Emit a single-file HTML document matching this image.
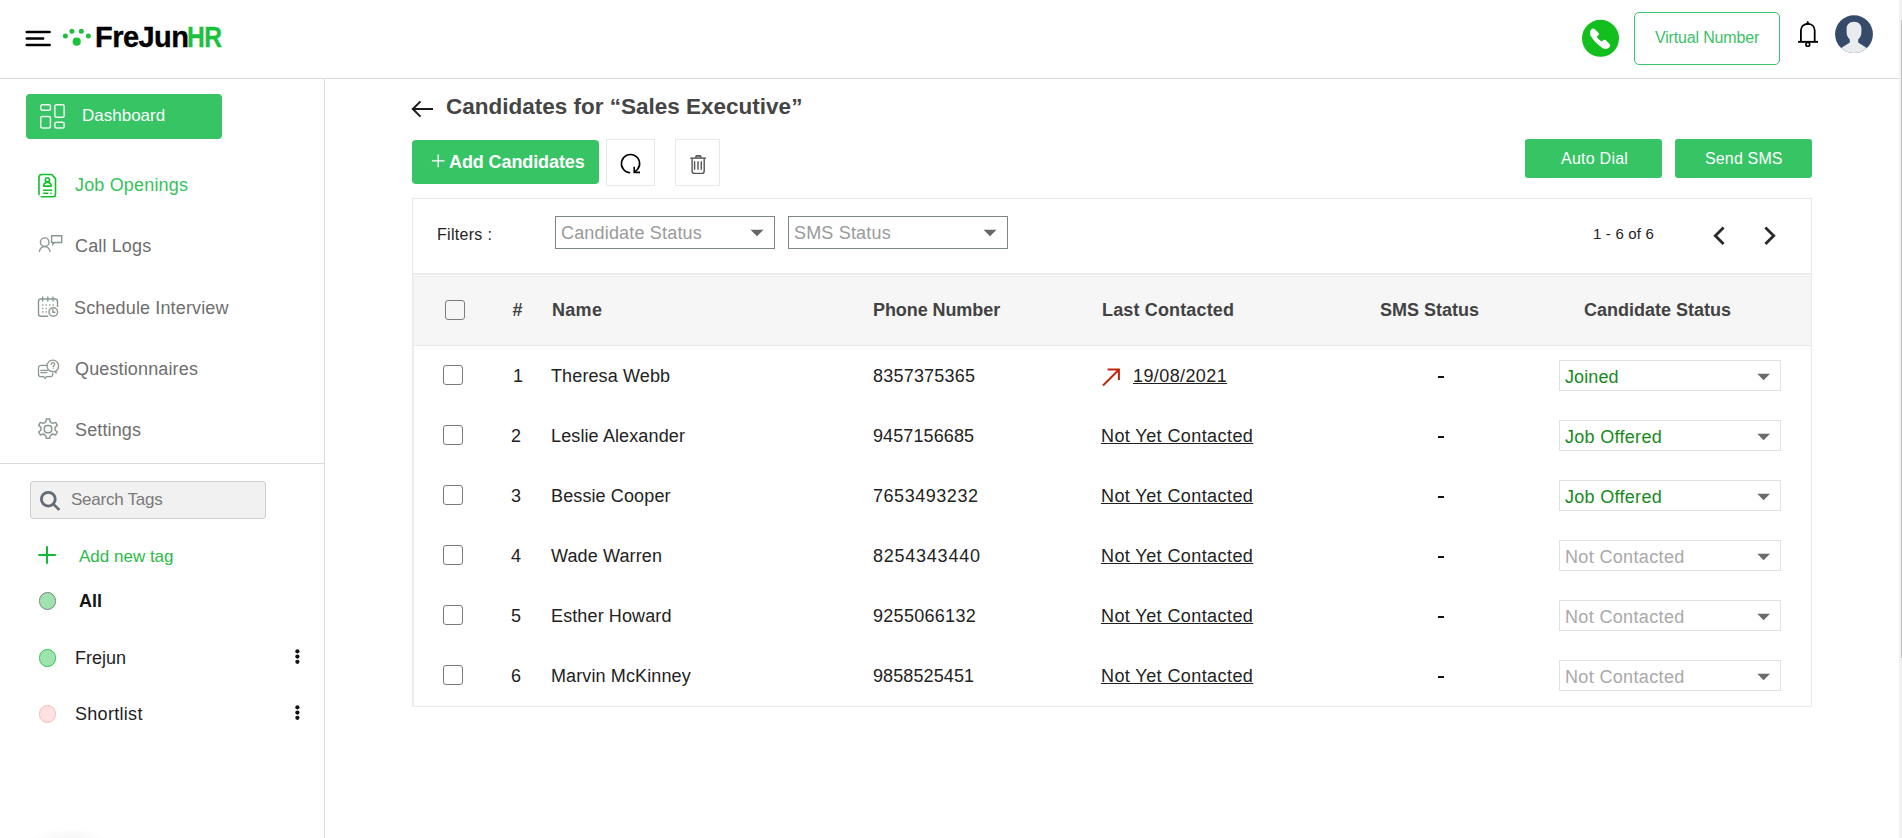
<!DOCTYPE html>
<html><head><meta charset="utf-8"><title>FreJunHR</title>
<style>
html,body{margin:0;padding:0;background:#fff;width:1902px;height:838px;overflow:hidden;position:relative}
.t{position:absolute;white-space:nowrap;font-family:"Liberation Sans", sans-serif}
svg{overflow:visible}
</style></head><body>
<div style="position:absolute;left:0px;top:78px;width:1899px;height:1px;background:#dcdcdc"></div>
<div style="position:absolute;left:324px;top:79px;width:1px;height:759px;background:#dcdcdc"></div>
<svg style="position:absolute;left:24px;top:29px" width="28" height="19" viewBox="0 0 28 19" fill="none"><path d="M2.7 3h23M2.7 9.5h16.5M2.7 16h23" stroke="#000" stroke-width="2.4" stroke-linecap="round"/></svg>
<svg style="position:absolute;left:60px;top:26px" width="34" height="22" viewBox="0 0 34 22" fill="none"><circle cx="5.4" cy="10" r="2.5" fill="#1cc13e"/><circle cx="11.9" cy="5.2" r="2.5" fill="#1cc13e"/><circle cx="21.3" cy="5.2" r="2.5" fill="#1cc13e"/><circle cx="28.4" cy="10" r="2.5" fill="#1cc13e"/><circle cx="16.7" cy="15.7" r="4.1" fill="#1cc13e"/></svg>
<div class="t" style="left:95px;top:23px;font-size:29px;line-height:29px;font-weight:700;color:#000;letter-spacing:-0.55px;-webkit-text-stroke:0.35px currentColor">FreJun<span style="color:#1cc13e;display:inline-block;transform:scaleX(0.85);transform-origin:0 0;letter-spacing:-0.6px;margin-left:-1.3px">HR</span></div>
<svg style="position:absolute;left:1580px;top:18px" width="42" height="42" viewBox="0 0 42 42" fill="none"><circle cx="20.5" cy="20.3" r="18.5" fill="#13bf1f"/><path d="M11.2 11.5C12.2 10.4 13.7 10.1 14.6 11L18.6 15C19.2 15.6 19.1 16.4 18.5 17L16.9 18.5C17.6 20.3 19.6 22.5 21.8 23.6L23.4 22.1C24 21.5 24.9 21.5 25.5 22.1L29.7 26.1C30.5 26.9 30.4 28.2 29.6 29.1L28.4 30C26.6 31.3 24.2 31.1 22.4 29.9C17.5 26.8 13.5 22.7 10.6 17.8C9.6 15.8 9.8 13 11.2 11.5Z" fill="#fff"/></svg>
<div style="position:absolute;left:1634px;top:12px;width:146px;height:53px;box-sizing:border-box;border:1.5px solid #3cc46a;border-radius:5px"></div>
<div class="t" style="left:1655px;top:30px;font-size:16px;line-height:16px;font-weight:400;color:#3bbf68;letter-spacing:-0.17px">Virtual Number</div>
<svg style="position:absolute;left:1792px;top:16px" width="32" height="34" viewBox="0 0 32 34" fill="none"><path d="M8.9 25.8V14.5C8.9 10.3 12 7.8 15.8 7.8S22.7 10.3 22.7 14.5V25.8" stroke="#000" stroke-width="1.8"/><path d="M6.1 25.85H26" stroke="#000" stroke-width="1.9"/><path d="M14 8.4L15.8 5.1L17.6 8.4Z" fill="#000" stroke="#000" stroke-width="0.6" stroke-linejoin="round"/><circle cx="15.8" cy="28.4" r="1.9" stroke="#000" stroke-width="1.6"/></svg>
<svg style="position:absolute;left:1835px;top:15px" width="38" height="38" viewBox="0 0 38 38" fill="none"><defs><clipPath id="av"><circle cx="19" cy="19.2" r="18.9"/></clipPath></defs><g clip-path="url(#av)"><rect width="38" height="38" fill="#364a6a"/><path d="M19 6.7C23.5 6.7 26.4 9.5 26.4 13.5V17.5C26.4 20.5 25 22.5 23.2 24.5V27.5L31 32.6L40 40H-2L7 32.6L14.8 27.5V24.5C13 22.5 11.6 20.5 11.6 17.5V13.5C11.6 9.5 14.5 6.7 19 6.7Z" fill="#e9ecef"/></g></svg>
<div style="position:absolute;left:1899px;top:0px;width:3px;height:838px;background:#f1f1f1"></div>
<div style="position:absolute;left:1901px;top:20px;width:1px;height:638px;background:#c1c1c1"></div>
<div style="position:absolute;left:26px;top:94px;width:196px;height:45px;background:#36c464;border-radius:4px"></div>
<svg style="position:absolute;left:39px;top:103px" width="27" height="27" viewBox="0 0 27 27" fill="none"><g stroke="#eef5ef" stroke-width="1.5"><rect x="1.75" y="1.75" width="9.7" height="5.5" rx="1.5"/><rect x="1.75" y="13.45" width="9.7" height="11.5" rx="1.5"/><rect x="15.85" y="1.75" width="9.3" height="12.5" rx="1.5"/><rect x="15.85" y="19.15" width="9.3" height="5.8" rx="1.5"/></g></svg>
<div class="t" style="left:82px;top:107px;font-size:17px;line-height:17px;font-weight:400;color:#fff;">Dashboard</div>
<svg style="position:absolute;left:36px;top:172px" width="22" height="27" viewBox="0 0 22 27" fill="none"><g stroke="#13bf2d" stroke-width="1.6" stroke-linecap="round" stroke-linejoin="round"><path d="M3 22.4V5.5c0-1.7 1.3-3 3-3h9.7l3.8 4.1v15.7c0 1.6-1 2.4-2.4 2.4H5.2"/><circle cx="11.4" cy="7.8" r="2.1"/><path d="M7.6 14.1c0-2.2 1.7-3.6 3.8-3.6s3.8 1.4 3.8 3.6z"/><path d="M7.7 18.3h7.9M7.7 21.2h4.2M14.8 21.2h.2"/></g></svg>
<div class="t" style="left:75px;top:176px;font-size:18px;line-height:18px;font-weight:400;color:#36c35a;letter-spacing:0.17px">Job Openings</div>
<svg style="position:absolute;left:36px;top:232px" width="28" height="24" viewBox="0 0 28 24" fill="none"><g stroke="#8a998f" stroke-width="1.4" fill="none"><circle cx="8.7" cy="10.2" r="4.3"/><path d="M3.3 19.8c.6-3.4 2.9-5.2 5.4-5.2s4.8 1.8 5.4 5.2"/><path d="M15.6 3.7h10.1v6.8h-7l-1.8 1.8v-1.8h-1.3z"/></g></svg>
<div class="t" style="left:75px;top:237px;font-size:18px;line-height:18px;font-weight:400;color:#6e6e6e;letter-spacing:0.14px">Call Logs</div>
<svg style="position:absolute;left:36px;top:294px" width="24" height="25" viewBox="0 0 24 25" fill="none"><g stroke="#8a998f" stroke-width="1.4" fill="none" stroke-linecap="round"><path d="M11.6 22.3H5c-1.4 0-2.5-1.1-2.5-2.5V7.5C2.5 6.1 3.6 5 5 5h14c1.4 0 2.5 1.1 2.5 2.5v5"/><path d="M6.6 3v4M11.8 3v4M17 3v4"/><circle cx="17.3" cy="18" r="4.3"/><path d="M16.9 15.6v2.7h1.9"/></g><g fill="#8a998f"><rect x="6" y="10.3" width="1.4" height="1.4"/><rect x="9.5" y="10.3" width="1.4" height="1.4"/><rect x="13" y="10.3" width="1.4" height="1.4"/><rect x="16.5" y="10.3" width="1.4" height="1.4"/><rect x="6" y="13.8" width="1.4" height="1.4"/><rect x="9.5" y="13.8" width="1.4" height="1.4"/><rect x="6" y="17.2" width="1.4" height="1.4"/><rect x="9.5" y="17.2" width="1.4" height="1.4"/></g></svg>
<div class="t" style="left:74px;top:299px;font-size:18px;line-height:18px;font-weight:400;color:#6e6e6e;letter-spacing:0.14px">Schedule Interview</div>
<svg style="position:absolute;left:36px;top:355px" width="24" height="25" viewBox="0 0 24 25" fill="none"><g stroke="#8a998f" stroke-width="1.3" fill="none" stroke-linecap="round" stroke-linejoin="round"><path d="M10.6 10.3H5c-1.4 0-2.5 1.1-2.5 2.5v6.4c0 1.4 1.1 2.5 2.5 2.5h2.8l1.3 1.6 1.3-1.6h3.8c1.4 0 2.5-1.1 2.5-2.5v-1"/><path d="M18.9 16.5l1.3 1.6-.3-2.3c1.7-1 2.7-2.8 2.7-4.9 0-3.2-2.6-5.7-5.8-5.7s-5.8 2.5-5.8 5.7 2.6 5.7 5.8 5.7c.7 0 1.4-.1 2.1-.1z"/><path d="M15.3 9.3c0-1 .8-1.6 1.7-1.6s1.7.6 1.7 1.6c0 1.2-1.5 1.3-1.5 2.6"/><path d="M4.8 15.4h6.6M4.8 17.6h6.2"/></g><circle cx="17.2" cy="13.6" r=".6" fill="#8a998f"/></svg>
<div class="t" style="left:75px;top:360px;font-size:18px;line-height:18px;font-weight:400;color:#6e6e6e;letter-spacing:0.14px">Questionnaires</div>
<svg style="position:absolute;left:36px;top:416px" width="24" height="26" viewBox="0 0 24 26" fill="none"><g stroke="#8a998f" stroke-width="1.5" fill="none" stroke-linejoin="round"><path d="M10.3 3.1h3.4l.7 3 2.3 1.3 2.9-1 1.7 3-2.3 2v2.6l2.3 2-1.7 3-2.9-1-2.3 1.3-.7 3h-3.4l-.7-3-2.3-1.3-2.9 1-1.7-3 2.3-2v-2.6l-2.3-2 1.7-3 2.9 1 2.3-1.3z"/><rect x="8.3" y="9.4" width="7.4" height="7.4" rx="3"/></g></svg>
<div class="t" style="left:75px;top:421px;font-size:18px;line-height:18px;font-weight:400;color:#6e6e6e;letter-spacing:0.14px">Settings</div>
<div style="position:absolute;left:0px;top:463px;width:324px;height:1px;background:#dcdcdc"></div>
<div style="position:absolute;left:30px;top:481px;width:236px;height:38px;box-sizing:border-box;background:#f1f1f1;border:1px solid #cfcfcf;border-radius:3px"></div>
<svg style="position:absolute;left:38px;top:489px" width="24" height="24" viewBox="0 0 24 24" fill="none"><circle cx="10.3" cy="10.2" r="6.9" stroke="#656b73" stroke-width="2.8"/><path d="M15.6 15.4L20.6 20.2" stroke="#656b73" stroke-width="2.6" stroke-linecap="round"/></svg>
<div class="t" style="left:71px;top:491px;font-size:17px;line-height:17px;font-weight:400;color:#7a7a7a;letter-spacing:-0.25px">Search Tags</div>
<svg style="position:absolute;left:36px;top:544px" width="22" height="22" viewBox="0 0 22 22" fill="none"><path d="M11 2.3v17.5M2.3 11h17.5" stroke="#13b836" stroke-width="2"/></svg>
<div class="t" style="left:79px;top:548px;font-size:17px;line-height:17px;font-weight:400;color:#2bbb48;">Add new tag</div>
<div style="position:absolute;left:38.8px;top:592.2px;width:17.6px;height:17.6px;box-sizing:border-box;background:#9fe3b1;border:1px solid #7f7f7f;border-radius:50%"></div>
<div class="t" style="left:79px;top:592px;font-size:18px;line-height:18px;font-weight:700;color:#151515;">All</div>
<div style="position:absolute;left:38.8px;top:649.2px;width:17.6px;height:17.6px;box-sizing:border-box;background:#9fe3b1;border:1px solid #2cc44d;border-radius:50%"></div>
<div class="t" style="left:75px;top:649px;font-size:18px;line-height:18px;font-weight:400;color:#1e1e1e;">Frejun</div>
<div style="position:absolute;left:38.8px;top:705.2px;width:17.6px;height:17.6px;box-sizing:border-box;background:#ffe1e1;border:1px solid #f7bcbc;border-radius:50%"></div>
<div class="t" style="left:75px;top:705px;font-size:18px;line-height:18px;font-weight:400;color:#1e1e1e;letter-spacing:0.3px">Shortlist</div>
<svg style="position:absolute;left:294px;top:649px" width="7" height="16" viewBox="0 0 7 16" fill="none"><circle cx="3.4" cy="2.3" r="2.1" fill="#111"/><circle cx="3.4" cy="7.6" r="2.1" fill="#111"/><circle cx="3.4" cy="12.8" r="2.1" fill="#111"/></svg>
<svg style="position:absolute;left:294px;top:705px" width="7" height="16" viewBox="0 0 7 16" fill="none"><circle cx="3.4" cy="2.3" r="2.1" fill="#111"/><circle cx="3.4" cy="7.6" r="2.1" fill="#111"/><circle cx="3.4" cy="12.8" r="2.1" fill="#111"/></svg>
<svg style="position:absolute;left:410px;top:99px" width="26" height="20" viewBox="0 0 26 20" fill="none"><path d="M23 10H3.3M10.5 2.4L2.8 10l7.7 7.6" stroke="#1a1a1a" stroke-width="2"/></svg>
<div class="t" style="left:446px;top:96px;font-size:22.5px;line-height:22.5px;font-weight:700;color:#454545;">Candidates for “Sales Executive”</div>
<div style="position:absolute;left:412px;top:140px;width:187px;height:44px;background:#36c464;border-radius:4px"></div>
<svg style="position:absolute;left:430px;top:153px" width="17" height="17" viewBox="0 0 17 17" fill="none"><path d="M8.25 1.6v12.6M1.9 7.9H14.6" stroke="#fff" stroke-width="1.4"/></svg>
<div class="t" style="left:449px;top:153px;font-size:18px;line-height:18px;font-weight:700;color:#fff;letter-spacing:-0.1px">Add Candidates</div>
<div style="position:absolute;left:606px;top:139px;width:49px;height:47px;box-sizing:border-box;border:1px solid #e8e8e8"></div>
<svg style="position:absolute;left:617px;top:151px" width="26" height="26" viewBox="0 0 26 26" fill="none"><path d="M13.2 21.7A9.1 9.1 0 1 1 20.6 18.3L17.6 21.2" stroke="#000" stroke-width="1.6"/><path d="M17.2 15.8V21.4H23" stroke="#000" stroke-width="1.6"/></svg>
<div style="position:absolute;left:675px;top:139px;width:45px;height:47px;box-sizing:border-box;border:1px solid #e8e8e8"></div>
<svg style="position:absolute;left:687px;top:153px" width="22" height="24" viewBox="0 0 22 24" fill="none"><g stroke="#555" stroke-width="1.4" fill="none"><path d="M3.2 5.1h15.7"/><path d="M8.9 5V3.6C8.9 3 9.3 2.6 9.9 2.6H12.9C13.5 2.6 13.9 3 13.9 3.6V5" fill="#888"/><path d="M5.1 5.3V18.3C5.1 19.5 6 20.4 7.2 20.4H15C16.2 20.4 17.2 19.5 17.2 18.3V5.3"/><path d="M7.6 8.2v8.6M11 8.2v8.6M14.3 8.2v8.6"/></g></svg>
<div style="position:absolute;left:1525px;top:139px;width:137px;height:39px;background:#36c464;border-radius:3px"></div>
<div class="t" style="left:1561px;top:151px;font-size:16px;line-height:16px;font-weight:400;color:#fff;letter-spacing:0.25px">Auto Dial</div>
<div style="position:absolute;left:1675px;top:139px;width:137px;height:39px;background:#36c464;border-radius:3px"></div>
<div class="t" style="left:1705px;top:151px;font-size:16px;line-height:16px;font-weight:400;color:#fff;letter-spacing:0.15px">Send SMS</div>
<div style="position:absolute;left:412px;top:198px;width:1400px;height:509px;box-sizing:border-box;border:1px solid #e9e9e9"></div>
<div class="t" style="left:437px;top:227px;font-size:16px;line-height:16px;font-weight:400;color:#222;letter-spacing:0.3px">Filters :</div>
<div style="position:absolute;left:555px;top:216px;width:220px;height:33px;box-sizing:border-box;border:1.3px solid #7d8884"></div>
<div class="t" style="left:561px;top:224px;font-size:18px;line-height:18px;font-weight:400;color:#9a9a9a;letter-spacing:0.18px">Candidate Status</div>
<svg style="position:absolute;left:750px;top:229px" width="14" height="8" viewBox="0 0 14 8" fill="none"><path d="M0.5 0.8h13L7 7.3z" fill="#666"/></svg>
<div style="position:absolute;left:788px;top:216px;width:220px;height:33px;box-sizing:border-box;border:1.3px solid #7d8884"></div>
<div class="t" style="left:794px;top:224px;font-size:18px;line-height:18px;font-weight:400;color:#9a9a9a;letter-spacing:0.18px">SMS Status</div>
<svg style="position:absolute;left:983px;top:229px" width="14" height="8" viewBox="0 0 14 8" fill="none"><path d="M0.5 0.8h13L7 7.3z" fill="#666"/></svg>
<div class="t" style="left:1593px;top:226px;font-size:15px;line-height:15px;font-weight:400;color:#222;letter-spacing:0.18px">1 - 6 of 6</div>
<svg style="position:absolute;left:1710px;top:225px" width="18" height="22" viewBox="0 0 18 22" fill="none"><path d="M13.6 2.4L5.3 10.7l8.3 8.3" stroke="#2a2a2a" stroke-width="2.8"/></svg>
<svg style="position:absolute;left:1760px;top:225px" width="18" height="22" viewBox="0 0 18 22" fill="none"><path d="M5.4 2.4L13.7 10.7l-8.3 8.3" stroke="#2a2a2a" stroke-width="2.8"/></svg>
<div style="position:absolute;left:413px;top:273px;width:1398px;height:2px;background:#ececec"></div>
<div style="position:absolute;left:413px;top:276px;width:1398px;height:1px;background:#ececec"></div>
<div style="position:absolute;left:413px;top:277px;width:1398px;height:68px;background:#f6f6f6"></div>
<div style="position:absolute;left:413px;top:276px;width:1px;height:430px;background:#efefef"></div>
<div style="position:absolute;left:413px;top:345px;width:1398px;height:1px;background:#e8e8e8"></div>
<div style="position:absolute;left:445px;top:300px;width:20px;height:20px;box-sizing:border-box;border:1px solid #7d7d7d;border-radius:3px"></div>
<div class="t" style="left:512.5px;top:301px;font-size:18px;line-height:18px;font-weight:700;color:#424242;letter-spacing:0px">#</div>
<div class="t" style="left:552px;top:301px;font-size:18px;line-height:18px;font-weight:700;color:#424242;letter-spacing:0.3px">Name</div>
<div class="t" style="left:873px;top:301px;font-size:18px;line-height:18px;font-weight:700;color:#424242;letter-spacing:-0.08px">Phone Number</div>
<div class="t" style="left:1102px;top:301px;font-size:18px;line-height:18px;font-weight:700;color:#424242;letter-spacing:0.15px">Last Contacted</div>
<div class="t" style="left:1380px;top:301px;font-size:18px;line-height:18px;font-weight:700;color:#424242;letter-spacing:0px">SMS Status</div>
<div class="t" style="left:1584px;top:301px;font-size:18px;line-height:18px;font-weight:700;color:#424242;letter-spacing:0px">Candidate Status</div>
<div style="position:absolute;left:443px;top:365px;width:20px;height:20px;box-sizing:border-box;background:#fff;border:1px solid #7a7a7a;border-radius:3px"></div>
<div class="t" style="left:513px;top:367px;font-size:18px;line-height:18px;font-weight:400;color:#222;">1</div>
<div class="t" style="left:551px;top:367px;font-size:18px;line-height:18px;font-weight:400;color:#222;letter-spacing:0.12px">Theresa Webb</div>
<div class="t" style="left:873px;top:367px;font-size:18px;line-height:18px;font-weight:400;color:#222;letter-spacing:0.21px">8357375365</div>
<svg style="position:absolute;left:1100px;top:366px" width="24" height="22" viewBox="0 0 24 22" fill="none"><path d="M3 19.5L18.3 4.2M7.6 3.6H18.9V14" stroke="#c2230f" stroke-width="2"/></svg>
<div class="t" style="left:1133px;top:367px;font-size:18px;line-height:18px;font-weight:400;color:#222;letter-spacing:0.4px;text-decoration:underline;text-underline-offset:1px">19/08/2021</div>
<div style="position:absolute;left:1438px;top:376px;width:6px;height:2px;background:#111"></div>
<div style="position:absolute;left:1559px;top:360px;width:222px;height:31px;box-sizing:border-box;border:1px solid #e1e1e1"></div>
<div class="t" style="left:1565px;top:368px;font-size:18px;line-height:18px;font-weight:400;color:#188a1d;letter-spacing:0.1px">Joined</div>
<svg style="position:absolute;left:1755px;top:372px" width="16" height="10" viewBox="0 0 16 10" fill="none"><path d="M2.3 1.8H15L8.65 8.3Z" fill="#6c6c6c"/></svg>
<div style="position:absolute;left:443px;top:425px;width:20px;height:20px;box-sizing:border-box;background:#fff;border:1px solid #7a7a7a;border-radius:3px"></div>
<div class="t" style="left:511px;top:427px;font-size:18px;line-height:18px;font-weight:400;color:#222;">2</div>
<div class="t" style="left:551px;top:427px;font-size:18px;line-height:18px;font-weight:400;color:#222;letter-spacing:0.12px">Leslie Alexander</div>
<div class="t" style="left:873px;top:427px;font-size:18px;line-height:18px;font-weight:400;color:#222;letter-spacing:0.11px">9457156685</div>
<div class="t" style="left:1101px;top:427px;font-size:18px;line-height:18px;font-weight:400;color:#222;letter-spacing:0.42px;text-decoration:underline;text-underline-offset:1px">Not Yet Contacted</div>
<div style="position:absolute;left:1438px;top:436px;width:6px;height:2px;background:#111"></div>
<div style="position:absolute;left:1559px;top:420px;width:222px;height:31px;box-sizing:border-box;border:1px solid #e1e1e1"></div>
<div class="t" style="left:1565px;top:428px;font-size:18px;line-height:18px;font-weight:400;color:#188a1d;letter-spacing:0.3px">Job Offered</div>
<svg style="position:absolute;left:1755px;top:432px" width="16" height="10" viewBox="0 0 16 10" fill="none"><path d="M2.3 1.8H15L8.65 8.3Z" fill="#6c6c6c"/></svg>
<div style="position:absolute;left:443px;top:485px;width:20px;height:20px;box-sizing:border-box;background:#fff;border:1px solid #7a7a7a;border-radius:3px"></div>
<div class="t" style="left:511px;top:487px;font-size:18px;line-height:18px;font-weight:400;color:#222;">3</div>
<div class="t" style="left:551px;top:487px;font-size:18px;line-height:18px;font-weight:400;color:#222;letter-spacing:0.12px">Bessie Cooper</div>
<div class="t" style="left:873px;top:487px;font-size:18px;line-height:18px;font-weight:400;color:#222;letter-spacing:0.54px">7653493232</div>
<div class="t" style="left:1101px;top:487px;font-size:18px;line-height:18px;font-weight:400;color:#222;letter-spacing:0.42px;text-decoration:underline;text-underline-offset:1px">Not Yet Contacted</div>
<div style="position:absolute;left:1438px;top:496px;width:6px;height:2px;background:#111"></div>
<div style="position:absolute;left:1559px;top:480px;width:222px;height:31px;box-sizing:border-box;border:1px solid #e1e1e1"></div>
<div class="t" style="left:1565px;top:488px;font-size:18px;line-height:18px;font-weight:400;color:#188a1d;letter-spacing:0.3px">Job Offered</div>
<svg style="position:absolute;left:1755px;top:492px" width="16" height="10" viewBox="0 0 16 10" fill="none"><path d="M2.3 1.8H15L8.65 8.3Z" fill="#6c6c6c"/></svg>
<div style="position:absolute;left:443px;top:545px;width:20px;height:20px;box-sizing:border-box;background:#fff;border:1px solid #7a7a7a;border-radius:3px"></div>
<div class="t" style="left:511px;top:547px;font-size:18px;line-height:18px;font-weight:400;color:#222;">4</div>
<div class="t" style="left:551px;top:547px;font-size:18px;line-height:18px;font-weight:400;color:#222;letter-spacing:0.12px">Wade Warren</div>
<div class="t" style="left:873px;top:547px;font-size:18px;line-height:18px;font-weight:400;color:#222;letter-spacing:0.76px">8254343440</div>
<div class="t" style="left:1101px;top:547px;font-size:18px;line-height:18px;font-weight:400;color:#222;letter-spacing:0.42px;text-decoration:underline;text-underline-offset:1px">Not Yet Contacted</div>
<div style="position:absolute;left:1438px;top:556px;width:6px;height:2px;background:#111"></div>
<div style="position:absolute;left:1559px;top:540px;width:222px;height:31px;box-sizing:border-box;border:1px solid #e1e1e1"></div>
<div class="t" style="left:1565px;top:548px;font-size:18px;line-height:18px;font-weight:400;color:#a9a9a9;letter-spacing:0.35px">Not Contacted</div>
<svg style="position:absolute;left:1755px;top:552px" width="16" height="10" viewBox="0 0 16 10" fill="none"><path d="M2.3 1.8H15L8.65 8.3Z" fill="#6c6c6c"/></svg>
<div style="position:absolute;left:443px;top:605px;width:20px;height:20px;box-sizing:border-box;background:#fff;border:1px solid #7a7a7a;border-radius:3px"></div>
<div class="t" style="left:511px;top:607px;font-size:18px;line-height:18px;font-weight:400;color:#222;">5</div>
<div class="t" style="left:551px;top:607px;font-size:18px;line-height:18px;font-weight:400;color:#222;letter-spacing:0.12px">Esther Howard</div>
<div class="t" style="left:873px;top:607px;font-size:18px;line-height:18px;font-weight:400;color:#222;letter-spacing:0.29px">9255066132</div>
<div class="t" style="left:1101px;top:607px;font-size:18px;line-height:18px;font-weight:400;color:#222;letter-spacing:0.42px;text-decoration:underline;text-underline-offset:1px">Not Yet Contacted</div>
<div style="position:absolute;left:1438px;top:616px;width:6px;height:2px;background:#111"></div>
<div style="position:absolute;left:1559px;top:600px;width:222px;height:31px;box-sizing:border-box;border:1px solid #e1e1e1"></div>
<div class="t" style="left:1565px;top:608px;font-size:18px;line-height:18px;font-weight:400;color:#a9a9a9;letter-spacing:0.35px">Not Contacted</div>
<svg style="position:absolute;left:1755px;top:612px" width="16" height="10" viewBox="0 0 16 10" fill="none"><path d="M2.3 1.8H15L8.65 8.3Z" fill="#6c6c6c"/></svg>
<div style="position:absolute;left:443px;top:665px;width:20px;height:20px;box-sizing:border-box;background:#fff;border:1px solid #7a7a7a;border-radius:3px"></div>
<div class="t" style="left:511px;top:667px;font-size:18px;line-height:18px;font-weight:400;color:#222;">6</div>
<div class="t" style="left:551px;top:667px;font-size:18px;line-height:18px;font-weight:400;color:#222;letter-spacing:0.12px">Marvin McKinney</div>
<div class="t" style="left:873px;top:667px;font-size:18px;line-height:18px;font-weight:400;color:#222;letter-spacing:0.11px">9858525451</div>
<div class="t" style="left:1101px;top:667px;font-size:18px;line-height:18px;font-weight:400;color:#222;letter-spacing:0.42px;text-decoration:underline;text-underline-offset:1px">Not Yet Contacted</div>
<div style="position:absolute;left:1438px;top:676px;width:6px;height:2px;background:#111"></div>
<div style="position:absolute;left:1559px;top:660px;width:222px;height:31px;box-sizing:border-box;border:1px solid #e1e1e1"></div>
<div class="t" style="left:1565px;top:668px;font-size:18px;line-height:18px;font-weight:400;color:#a9a9a9;letter-spacing:0.35px">Not Contacted</div>
<svg style="position:absolute;left:1755px;top:672px" width="16" height="10" viewBox="0 0 16 10" fill="none"><path d="M2.3 1.8H15L8.65 8.3Z" fill="#6c6c6c"/></svg>
<div style="position:absolute;left:30px;top:828px;width:80px;height:20px;background:radial-gradient(ellipse at center, rgba(0,0,0,0.035), rgba(0,0,0,0) 70%)"></div>
</body></html>
